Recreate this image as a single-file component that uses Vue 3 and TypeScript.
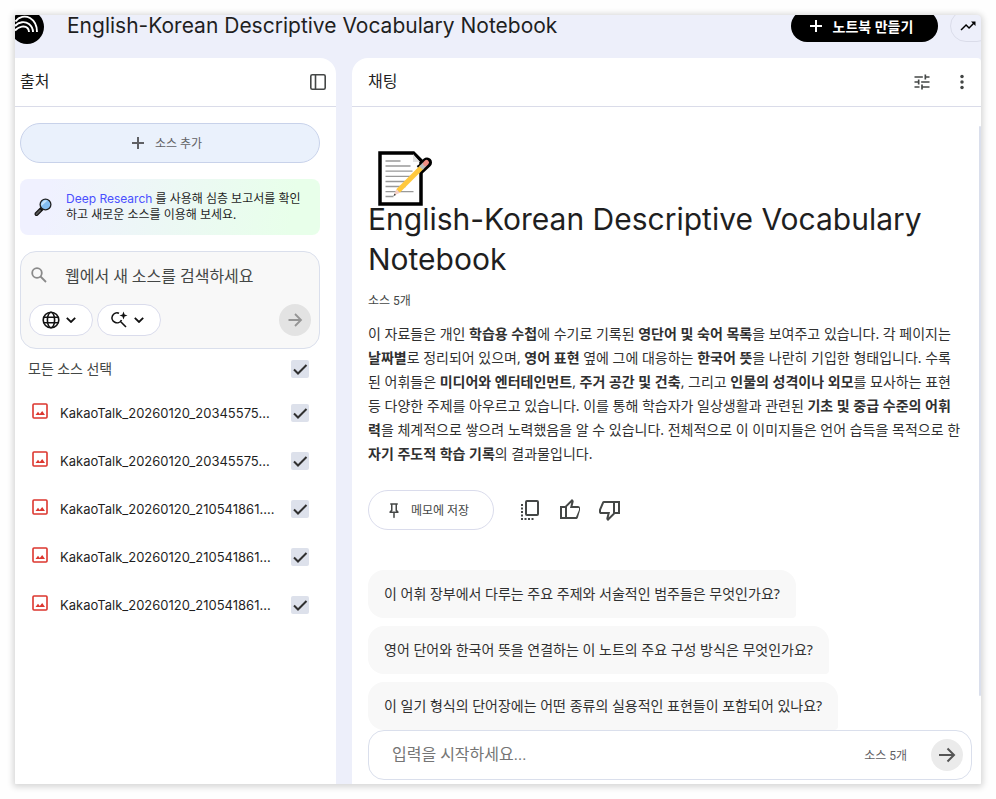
<script setup lang="ts">
import { ref } from 'vue'

interface Source {
  id: number
  name: string
  checked: boolean
}

interface Run {
  text: string
  bold?: boolean
}

const sources = ref<Source[]>([
  { id: 1, name: 'KakaoTalk_20260120_20345575...', checked: true },
  { id: 2, name: 'KakaoTalk_20260120_20345575...', checked: true },
  { id: 3, name: 'KakaoTalk_20260120_210541861....', checked: true },
  { id: 4, name: 'KakaoTalk_20260120_210541861...', checked: true },
  { id: 5, name: 'KakaoTalk_20260120_210541861...', checked: true },
])

const allChecked = ref(true)
const query = ref('')
const message = ref('')

const summary: Run[] = [
  { text: '이 자료들은 개인 ' },
  { text: '학습용 수첩', bold: true },
  { text: '에 수기로 기록된 ' },
  { text: '영단어 및 숙어 목록', bold: true },
  { text: '을 보여주고 있습니다. 각 페이지는 ' },
  { text: '날짜별', bold: true },
  { text: '로 정리되어 있으며, ' },
  { text: '영어 표현', bold: true },
  { text: ' 옆에 그에 대응하는 ' },
  { text: '한국어 뜻', bold: true },
  { text: '을 나란히 기입한 형태입니다. 수록된 어휘들은 ' },
  { text: '미디어와 엔터테인먼트', bold: true },
  { text: ', ' },
  { text: '주거 공간 및 건축', bold: true },
  { text: ', 그리고 ' },
  { text: '인물의 성격이나 외모', bold: true },
  { text: '를 묘사하는 표현 등 다양한 주제를 아우르고 있습니다. 이를 통해 학습자가 일상생활과 관련된 ' },
  { text: '기초 및 중급 수준의 어휘력', bold: true },
  { text: '을 체계적으로 쌓으려 노력했음을 알 수 있습니다. 전체적으로 이 이미지들은 언어 습득을 목적으로 한 ' },
  { text: '자기 주도적 학습 기록', bold: true },
  { text: '의 결과물입니다.' },
]

const suggestions: string[] = [
  '이 어휘 장부에서 다루는 주요 주제와 서술적인 범주들은 무엇인가요?',
  '영어 단어와 한국어 뜻을 연결하는 이 노트의 주요 구성 방식은 무엇인가요?',
  '이 일기 형식의 단어장에는 어떤 종류의 실용적인 표현들이 포함되어 있나요?',
]

function toggleAll(): void {
  sources.value.forEach((s) => (s.checked = allChecked.value))
}
</script>

<template>
  <div class="page">
    <div class="window">
      <header class="topbar">
        <svg class="logo" viewBox="0 0 34 34" aria-hidden="true">
          <circle cx="17" cy="17" r="17" />
          <g fill="none" stroke="#fff" stroke-width="1.900">
            <path d="M5.500 11.500C9 6.500 15 5.500 20 8C25 11 27 16 27 22" />
            <path d="M5 16C9 11.500 15 11 19 14C22 16.500 23 19 23 22" />
            <path d="M5 20.500C9 16 15 15.500 17.500 18C19 19.500 19 21 19 22" />
          </g>
        </svg>
        <h1 class="title">English-Korean Descriptive Vocabulary Notebook</h1>
        <button class="create" type="button">
          <svg viewBox="0 0 12 12" aria-hidden="true"><path d="M6 0v12M0 6h12" /></svg>
          <span>노트북 만들기</span>
        </button>
        <button class="stats" type="button" aria-label="분석">
          <svg viewBox="0 0 24 24" aria-hidden="true">
            <path d="m16 6 2.290 2.290-4.880 4.880-4-4L2 16.590 3.410 18l6-6 4 4 6.300-6.290L22 12V6z" />
          </svg>
        </button>
      </header>

      <div class="columns">
        <aside class="panel sources">
          <div class="panel-head">
            <h2>출처</h2>
            <button class="icon-btn" type="button" aria-label="패널 접기">
              <svg class="outline" viewBox="0 0 20 20" aria-hidden="true">
                <rect x="2.800" y="2.800" width="14.400" height="14.400" rx="1.500" /><path d="M7.500 3v14" />
              </svg>
            </button>
          </div>
          <div class="sources-body">
            <button class="add" type="button">
              <svg viewBox="0 0 12 12" aria-hidden="true"><path d="M6 0v12M0 6h12" /></svg>
              <span>소스 추가</span>
            </button>

            <div class="promo">
              <svg viewBox="0 0 20 20" aria-hidden="true">
                <path d="M3.500 17 9 11.500" stroke="#111" stroke-width="4" stroke-linecap="round" />
                <path d="M3.500 17 7 13.500" stroke="#555" stroke-width="1.800" stroke-linecap="round" />
                <circle cx="12.500" cy="7.500" r="5.400" fill="#83bdf0" stroke="#222" stroke-width="1.300" />
                <path d="M8.500 9A4.500 4.500 0 0 1 14.500 3.600Z" fill="#c3e2fb" />
              </svg>
              <p><a href="#deep-research">Deep Research</a> 를 사용해 심층 보고서를 확인하고 새로운 소스를 이용해 보세요.</p>
            </div>

            <form class="search" @submit.prevent>
              <div class="search-field">
                <svg viewBox="0 0 16 16" aria-hidden="true">
                  <circle cx="6" cy="6" r="4.800" /><path d="m9.500 9.500 5.500 5.500" />
                </svg>
                <input v-model="query" type="text" placeholder="웹에서 새 소스를 검색하세요" aria-label="웹에서 새 소스를 검색하세요" />
              </div>
              <div class="search-tools">
                <button class="chip" type="button" aria-label="웹">
                  <svg class="glyph" viewBox="0 0 18 18" aria-hidden="true">
                    <circle cx="9" cy="9" r="7.800" /><ellipse cx="9" cy="9" rx="3.600" ry="7.800" />
                    <path d="M1.800 6.300h14.400M1.800 11.700h14.400" />
                  </svg>
                  <svg class="caret" viewBox="0 0 10 6" aria-hidden="true"><path d="m.8.8 4.200 4.200L9.200.8" /></svg>
                </button>
                <button class="chip" type="button" aria-label="빠른 조사">
                  <svg class="glyph" viewBox="0 0 18 18" aria-hidden="true">
                    <path d="M9 2.200A5 5 0 1 0 11.500 9M10.500 10.500 16 16" />
                    <path class="solid" d="M13.500.5 14.600 3.400 17.500 4.500 14.600 5.600 13.500 8.500 12.400 5.600 9.500 4.500 12.400 3.400Z" />
                  </svg>
                  <svg class="caret" viewBox="0 0 10 6" aria-hidden="true"><path d="m.8.8 4.200 4.200L9.200.8" /></svg>
                </button>
                <button class="send muted" type="submit" aria-label="검색">
                  <svg viewBox="0 0 18 18" aria-hidden="true"><path d="M2.500 9h12.500M9 3l6 6-6 6" /></svg>
                </button>
              </div>
            </form>

            <label class="select-all">
              <span>모든 소스 선택</span>
              <span class="check">
                <input v-model="allChecked" type="checkbox" @change="toggleAll" />
                <svg v-if="allChecked" viewBox="0 0 18 18" aria-hidden="true"><path d="m3 9.500 4 4 8.500-8.500" /></svg>
              </span>
            </label>
            <ul class="source-list">
              <li v-for="s in sources" :key="s.id">
                <label class="source">
                  <svg class="picture" viewBox="0 0 16 16" aria-hidden="true">
                    <rect x="1" y="1" width="14" height="14" rx="1" />
                    <path d="M3.500 12 6 8.800 7.800 11l2.400-3 2.800 4Z" />
                  </svg>
                  <span class="name">{{ s.name }}</span>
                  <span class="check">
                    <input v-model="s.checked" type="checkbox" />
                    <svg v-if="s.checked" viewBox="0 0 18 18" aria-hidden="true"><path d="m3 9.500 4 4 8.500-8.500" /></svg>
                  </span>
                </label>
              </li>
            </ul>
          </div>
        </aside>

        <main class="panel chat">
          <div class="panel-head">
            <h2>채팅</h2>
            <div class="head-tools">
              <button class="icon-btn" type="button" aria-label="채팅 설정">
                <svg viewBox="0 0 24 24" aria-hidden="true">
                  <path d="M3 17v2h6v-2H3zM3 5v2h10V5H3zm10 16v-2h8v-2h-8v-2h-2v6h2zM7 9v2H3v2h4v2h2V9H7zm14 4v-2H11v2h10zm-6-4h2V7h4V5h-4V3h-2v6z" />
                </svg>
              </button>
              <button class="icon-btn" type="button" aria-label="더보기">
                <svg viewBox="0 0 24 24" aria-hidden="true">
                  <circle cx="12" cy="5.500" r="2.100" /><circle cx="12" cy="12" r="2.100" /><circle cx="12" cy="18.500" r="2.100" />
                </svg>
              </button>
            </div>
          </div>

          <div class="chat-scroll">
            <svg class="memo" viewBox="0 0 56 56" aria-hidden="true">
              <path d="M42 18 49 11.500" stroke="#000" stroke-width="10" stroke-linecap="round" />
              <path d="M2 2h33.500L43 9.500V53H2Z" fill="#fff" stroke="#000" stroke-width="3.500" />
              <path d="M35 3v8h7Z" fill="#e2e2e2" />
              <path d="M7.500 10h15M7.500 15h25M7.500 20.200h27M7.500 25.300h25M7.500 30.500h23M7.500 35.500h20M7.500 40.700h28M7.500 45.500h8" stroke="#999" stroke-width="1.300" />
              <path d="M40.500 17.500 49 11.500" stroke="#000" stroke-width="6" />
              <path d="M20 40 44 16" stroke="#ffc83d" stroke-width="5" />
              <path d="m16 44.500 2.200-6.200 3.800 3.500Z" fill="#f5cfc4" />
              <path d="m15.500 45 1-2.600 1.500 1.500Z" fill="#333" />
              <path d="m43 17 4-4" stroke="#bbb" stroke-width="5" />
              <path d="m47.500 12.500 1-1" stroke="#f08d83" stroke-width="5" stroke-linecap="round" />
            </svg>
            <h3 class="headline">English-Korean Descriptive Vocabulary Notebook</h3>
            <p class="count">소스 5개</p>
            <p class="summary">
              <template v-for="(r, i) in summary" :key="i"><strong v-if="r.bold">{{ r.text }}</strong><template v-else>{{ r.text }}</template></template>
            </p>
            <div class="actions">
              <button class="save" type="button">
                <svg viewBox="0 -960 960 960" aria-hidden="true">
                  <path d="m640-480 80 80v80H520v240l-40 40-40-40v-240H240v-80l80-80v-280h-40v-80h400v80h-40v280Zm-286 80h252l-46-46v-314H400v314l-46 46Z" />
                </svg>
                <span>메모에 저장</span>
              </button>
              <button class="icon-btn" type="button" aria-label="복사">
                <svg viewBox="0 0 24 24" aria-hidden="true">
                  <path fill-rule="evenodd" d="M9 2h10q2 0 2 2v12q0 2-2 2H9q-2 0-2-2V4q0-2 2-2zm0 2v12h10V4z" />
                  <path d="M3 6h2v2H3zM3 9.500h2v2H3zM3 13h2v2H3zM3 16.500h2v2H3zM3 20h2v2H3zM6.500 20h2v2h-2zM10 20h2v2h-2zM13.500 20h2v2h-2z" />
                </svg>
              </button>
              <button class="icon-btn" type="button" aria-label="좋은 대답">
                <svg viewBox="0 -960 960 960" aria-hidden="true">
                  <path d="M720-120H280v-520l280-280 50 50q7 7 11.500 19t4.500 23v14l-44 174h218q32 0 56 24t24 56v80q0 7-2 15t-4 15L794-168q-9 20-30 34t-44 14Zm-360-80h360l120-280v-80H480l54-220-174 174v406Zm-80-440v80H160v360h120v80H80v-520h200Z" />
                </svg>
              </button>
              <button class="icon-btn" type="button" aria-label="별로인 대답">
                <svg viewBox="0 -960 960 960" aria-hidden="true">
                  <path d="M240-840h440v520L400-40l-50-50q-7-7-11.500-19t-4.500-23v-14l44-174H120q-32 0-56-24t-24-56v-80q0-7 2-15t4-15l120-282q9-20 30-34t44-14Zm360 80H240L120-480v80h360l-54 220 174-174v-406Zm80 440v-80h120v-360H680v-80h200v520H680Z" />
                </svg>
              </button>
            </div>
            <div class="suggestions">
              <button v-for="text in suggestions" :key="text" class="suggestion" type="button">{{ text }}</button>
            </div>
            <div class="thumb"></div>
          </div>

          <form class="composer" @submit.prevent>
            <input v-model="message" type="text" placeholder="입력을 시작하세요..." aria-label="입력을 시작하세요" />
            <span class="composer-count">소스 5개</span>
            <button class="send" type="submit" aria-label="보내기">
              <svg viewBox="0 0 18 18" aria-hidden="true"><path d="M1 9h15M9.500 2.500 16 9l-6.500 6.500" /></svg>
            </button>
          </form>
        </main>
      </div>
    </div>
  </div>
</template>

<style>
body {
  background: #fefefe;
}
</style>

<style scoped>
* {
  box-sizing: border-box;
}

.page {
  height: 100vh;
  padding: 15px;
  font-family: Roboto, 'Noto Sans CJK KR', sans-serif;
  font-size: 14px;
  color: #1f1f1f;
}

h1,
h2,
h3,
p,
ul {
  margin: 0;
  padding: 0;
  font-weight: 400;
}

button,
input {
  font: inherit;
  color: inherit;
  margin: 0;
  padding: 0;
  border: 0;
  background: none;
}

button {
  cursor: pointer;
}

svg {
  display: block;
  flex: none;
}

.window {
  display: flex;
  flex-direction: column;
  height: 100%;
  overflow: hidden;
  border-radius: 1px 4px 1px 1px;
  background: #edeffa;
  box-shadow: 0 1px 6px 2px rgba(0, 0, 0, 0.16);
}

.topbar {
  display: flex;
  align-items: flex-start;
  flex: none;
  height: 48px;
  margin: -5px -12px 0 -5px;
}

.logo {
  width: 34px;
  height: 34px;
}

.title {
  flex: 1;
  margin: 5px 0 0 23px;
  font-family: Inter, 'Noto Sans CJK KR', sans-serif;
  font-size: 21px;
  line-height: 22px;
  white-space: nowrap;
}

.create {
  display: flex;
  align-items: center;
  justify-content: center;
  gap: 11px;
  width: 147px;
  height: 32px;
  padding-right: 6px;
  border-radius: 16px;
  background: #000;
  color: #fff;
  font-weight: 700;
}

.create svg,
.add svg {
  width: 12px;
  height: 12px;
  stroke: currentColor;
  stroke-width: 2;
}

.stats {
  display: flex;
  align-items: center;
  width: 43px;
  height: 32px;
  margin-left: 12px;
  padding-left: 8px;
  border: 1px solid #dadce9;
  border-radius: 16px;
}

.stats svg {
  width: 18px;
  height: 18px;
}

.columns {
  display: flex;
  flex: 1;
  gap: 16px;
  min-height: 0;
}

.panel {
  display: flex;
  flex-direction: column;
  min-width: 0;
  background: #fff;
}

.sources {
  flex: 0 0 321px;
  border-radius: 0 16px 0 0;
}

.chat {
  flex: 1;
  border-radius: 16px 4px 0 0;
}

.panel-head {
  display: flex;
  align-items: center;
  justify-content: space-between;
  flex: none;
  height: 49px;
  padding: 0 8px 0 5px;
  border-bottom: 1px solid #dadce9;
}

.chat .panel-head {
  padding: 0 9px 0 16px;
}

h2 {
  font-size: 16px;
  line-height: 24px;
}

.head-tools {
  display: flex;
  gap: 20px;
}

.icon-btn {
  display: grid;
  place-items: center;
  color: #444746;
}

.icon-btn svg {
  width: 20px;
  height: 20px;
  fill: currentColor;
}

.icon-btn .outline {
  fill: none;
  stroke: currentColor;
  stroke-width: 1.6;
}

.sources-body {
  display: flex;
  flex-direction: column;
  padding: 16px 16px 16px 5px;
}

.add {
  display: flex;
  align-items: center;
  justify-content: center;
  gap: 11px;
  height: 40px;
  padding: 0 6px 1px 0;
  border: 1px solid #c8d2ea;
  border-radius: 20px;
  background: #eaf1fc;
  color: #5f6064;
  font-size: 12px;
}

.promo {
  display: flex;
  align-items: center;
  gap: 13px;
  height: 56px;
  margin-top: 16px;
  padding: 0 14px 0 13px;
  border-radius: 8px;
  background: linear-gradient(100deg, #f0f1ff 10%, #e8ffea 90%);
}

.promo svg {
  width: 20px;
  height: 20px;
}

.promo p {
  font-family: 'Noto Sans', 'Noto Sans CJK KR', sans-serif;
  font-size: 12px;
  line-height: 16px;
  word-break: break-all;
}

.promo a {
  color: #4a50ff;
  font-family: Inter, 'Noto Sans CJK KR', sans-serif;
  text-decoration: none;
}

.search {
  display: flex;
  flex-direction: column;
  justify-content: space-between;
  height: 98px;
  margin-top: 16px;
  padding: 12px 8px;
  border: 1px solid #dadfec;
  border-radius: 16px;
  background: #f8f8f8;
}

.search-field {
  display: flex;
  align-items: center;
  gap: 18px;
  padding-left: 2px;
}

.search-field svg {
  width: 16px;
  height: 16px;
  margin-bottom: 2px;
  fill: none;
  stroke: #8a8a8a;
  stroke-width: 1.8;
}

.search-field input {
  flex: 1;
  min-width: 0;
  height: 24px;
  font-size: 16px;
  outline: none;
}

.search-field input::placeholder {
  color: #444746;
  opacity: 1;
}

.search-tools {
  display: flex;
  gap: 4px;
}

.chip {
  display: flex;
  align-items: center;
  justify-content: center;
  gap: 6px;
  width: 64px;
  height: 32px;
  padding-right: 4px;
  border: 1px solid #dadcec;
  border-radius: 16px;
  background: #fff;
}

.chip svg {
  fill: none;
  stroke: #111;
}

.chip .glyph {
  width: 18px;
  height: 18px;
  stroke-width: 1.6;
}

.chip .solid {
  fill: #111;
  stroke: none;
}

.chip .caret {
  width: 10px;
  height: 6px;
  stroke-width: 1.8;
}

.send {
  display: grid;
  place-items: center;
  width: 32px;
  height: 32px;
  margin-left: auto;
  border-radius: 50%;
  background: #ebebeb;
  color: #555;
}

.send svg {
  width: 18px;
  height: 18px;
  fill: none;
  stroke: currentColor;
  stroke-width: 2;
}

.send.muted {
  background: #e3e3e3;
  color: #959595;
}

.send.muted svg {
  stroke-width: 1.8;
}

.select-all,
.source {
  display: flex;
  align-items: center;
  justify-content: space-between;
  height: 40px;
  padding: 0 11px 0 8px;
}

.select-all {
  color: #444746;
}

.select-all > span:first-child {
  padding-bottom: 2px;
}

.source-list {
  list-style: none;
}

.source {
  gap: 12px;
  height: 48px;
  padding-left: 12px;
}

.name {
  flex: 1;
  min-width: 0;
  font-family: Inter, 'Noto Sans CJK KR', sans-serif;
  font-size: 13px;
  white-space: nowrap;
}

.picture {
  width: 16px;
  height: 16px;
  margin-bottom: 4px;
  fill: none;
  stroke: #dc362e;
  stroke-width: 1.6;
}

.picture path {
  fill: #dc362e;
  stroke: none;
}

.check {
  display: grid;
  width: 18px;
  height: 18px;
}

.check input,
.check svg {
  grid-area: 1 / 1;
  width: 18px;
  height: 18px;
}

.check input {
  appearance: none;
  border-radius: 2px;
  background: #dde1eb;
}

.check svg {
  z-index: 1;
  fill: none;
  stroke: #303030;
  stroke-width: 2;
  pointer-events: none;
}

.chat-scroll {
  position: relative;
  flex: 1;
  min-height: 0;
  padding: 44px 20px 0 16px;
  overflow: hidden;
}

.memo {
  width: 56px;
  height: 56px;
  margin: 0 0 -8px 10px;
}

.headline {
  font-family: Inter, 'Noto Sans CJK KR', sans-serif;
  font-size: 30px;
  line-height: 40px;
}

.count {
  margin-top: 14px;
  font-size: 12px;
  line-height: 16px;
  color: #444746;
}

.summary {
  margin-top: 13px;
  font-family: 'Noto Sans', 'Noto Sans CJK KR', sans-serif;
  line-height: 24px;
  color: #303030;
  word-break: break-all;
}

.summary strong {
  font-weight: 700;
}

.actions {
  display: flex;
  align-items: center;
  gap: 16px;
  margin-top: 24px;
}

.save {
  display: flex;
  align-items: center;
  justify-content: center;
  gap: 8px;
  width: 126px;
  height: 40px;
  margin-right: 8px;
  padding: 0 8px 1px 0;
  border: 1px solid #dadcec;
  border-radius: 20px;
  color: #444746;
  font-size: 12px;
}

.save svg {
  width: 18px;
  height: 18px;
  fill: currentColor;
}

.actions .icon-btn svg {
  width: 24px;
  height: 24px;
}

.suggestions {
  display: flex;
  flex-direction: column;
  align-items: flex-start;
  gap: 8px;
  margin-top: 40px;
}

.suggestion {
  flex: none;
  height: 48px;
  padding: 0 16px 2px;
  border-radius: 16px 16px 4px 16px;
  background: #f8f8f8;
  color: #303030;
  font-family: 'Noto Sans', 'Noto Sans CJK KR', sans-serif;
  white-space: nowrap;
}

.thumb {
  position: absolute;
  top: 19px;
  right: 0;
  bottom: 34px;
  width: 2px;
  border-radius: 2px;
  background: #dadfec;
}

.composer {
  display: flex;
  align-items: center;
  flex: none;
  height: 50px;
  margin: 0 9px 4px 16px;
  padding: 0 8px 0 23px;
  border: 1px solid #dadfec;
  border-radius: 16px;
}

.composer input {
  flex: 1;
  min-width: 0;
  height: 24px;
  padding-bottom: 2px;
  font-size: 16px;
  outline: none;
}

.composer input::placeholder {
  color: #757575;
  opacity: 1;
}

.composer-count {
  padding-bottom: 2px;
  font-size: 12px;
  color: #5f6064;
}

.composer .send {
  margin-left: 24px;
}
</style>
